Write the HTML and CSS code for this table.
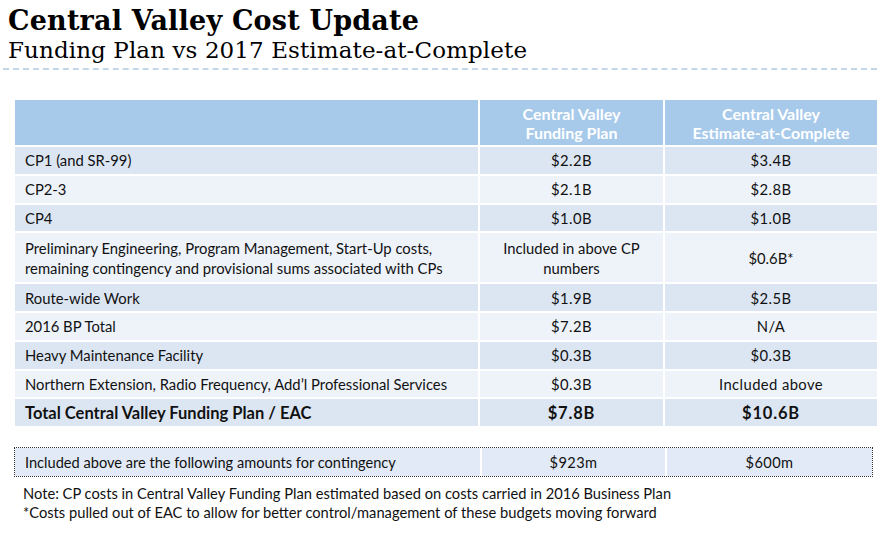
FILE: index.html
```html
<!DOCTYPE html>
<html>
<head>
<meta charset="utf-8">
<link rel="stylesheet" href="styles.css">
</head>
<body>
<header class="head">
  <h1 class="title">Central Valley Cost Update</h1>
  <h2 class="subtitle">Funding Plan vs 2017 Estimate-at-Complete</h2>
</header>
<div class="rule"></div>

<div class="grid">
  <div class="th"></div>
  <div class="th c">Central Valley<br>Funding Plan</div>
  <div class="th c">Central Valley<br>Estimate-at-Complete</div>

  <div class="td d">CP1 (and SR-99)</div>
  <div class="td d c">$2.2B</div>
  <div class="td d c">$3.4B</div>

  <div class="td l">CP2-3</div>
  <div class="td l c">$2.1B</div>
  <div class="td l c">$2.8B</div>

  <div class="td d">CP4</div>
  <div class="td d c">$1.0B</div>
  <div class="td d c">$1.0B</div>

  <div class="td l tall">Preliminary Engineering, Program Management, Start-Up costs,<br>remaining contingency and provisional sums associated with CPs</div>
  <div class="td l c tall">Included in above CP<br>numbers</div>
  <div class="td l c tall">$0.6B*</div>

  <div class="td d">Route-wide Work</div>
  <div class="td d c">$1.9B</div>
  <div class="td d c">$2.5B</div>

  <div class="td l">2016 BP Total</div>
  <div class="td l c">$7.2B</div>
  <div class="td l c">N/A</div>

  <div class="td d">Heavy Maintenance Facility</div>
  <div class="td d c">$0.3B</div>
  <div class="td d c">$0.3B</div>

  <div class="td l">Northern Extension, Radio Frequency, Add’l Professional Services</div>
  <div class="td l c">$0.3B</div>
  <div class="td l c">Included above</div>

  <div class="td d b">Total Central Valley Funding Plan / EAC</div>
  <div class="td d c b">$7.8B</div>
  <div class="td d c b">$10.6B</div>
</div>

<div class="cont">
  <div class="cc">Included above are the following amounts for contingency</div>
  <div class="cc c">$923m</div>
  <div class="cc c">$600m</div>
</div>

<div class="notes">
  <p>Note: CP costs in Central Valley Funding Plan estimated based on costs carried in 2016 Business Plan</p>
  <p>*Costs pulled out of EAC to allow for better control/management of these budgets moving forward</p>
</div>
</body>
</html>
```

FILE: styles.css
```css
html, body {
  margin: 0;
  padding: 0;
  background: #ffffff;
}
body {
  width: 893px;
  height: 537px;
  overflow: hidden;
  font-family: Lato, "Open Sans", sans-serif;
  color: #111;
}
.head {
  padding: 5px 0 0 8px;
}
.title {
  margin: 0;
  font-family: "DejaVu Serif", serif;
  font-weight: bold;
  font-size: 27px;
  line-height: 32px;
  color: #000;
  letter-spacing: 0.2px;
}
.subtitle {
  margin: 0;
  font-family: "DejaVu Serif", serif;
  font-weight: normal;
  font-size: 23px;
  line-height: 27px;
  color: #000;
  letter-spacing: 0.1px;
}
.rule {
  margin: 4px 16px 0 3px;
  border-top: 2px dashed #c4d6e9;
}
.grid {
  display: grid;
  grid-template-columns: 463px 183px 212px;
  grid-template-rows: 45px repeat(3, 26.75px) 49px repeat(5, 26.75px);
  gap: 2px 2px;
  margin: 30px 0 0 15px;
  width: 862px;
}
.th {
  background: #a7caeb;
  color: #fff;
  font-weight: bold;
  font-size: 16px;
  line-height: 19px;
  display: flex;
  align-items: center;
  justify-content: center;
  text-align: center;
}
.td {
  display: flex;
  align-items: center;
  padding-left: 10px;
  font-size: 14.8px;
  line-height: 20px;
}
.td.c, .cc.c {
  justify-content: center;
  text-align: center;
  padding-left: 0;
  letter-spacing: 0.4px;
}
.td.c.tall {
  letter-spacing: 0;
}
.d { background: #dce6f3; }
.l { background: #eef3fa; }
.b { font-weight: bold; font-size: 16.5px; }
.td.c.b { letter-spacing: 0.8px; }
.cont {
  display: grid;
  grid-template-columns: 465px 183px 205px;
  gap: 0 2px;
  margin: 21px 0 0 14px;
  width: 857px;
  border: 1px dotted #333;
  background: #fff;
  height: 28px;
}
.cc {
  background: #e1eaf6;
  display: flex;
  align-items: center;
  padding-left: 10px;
  font-size: 14.6px;
}
.notes {
  margin: 7px 0 0 23px;
  font-size: 14.7px;
  line-height: 19px;
}
.notes p {
  margin: 0;
}
```
